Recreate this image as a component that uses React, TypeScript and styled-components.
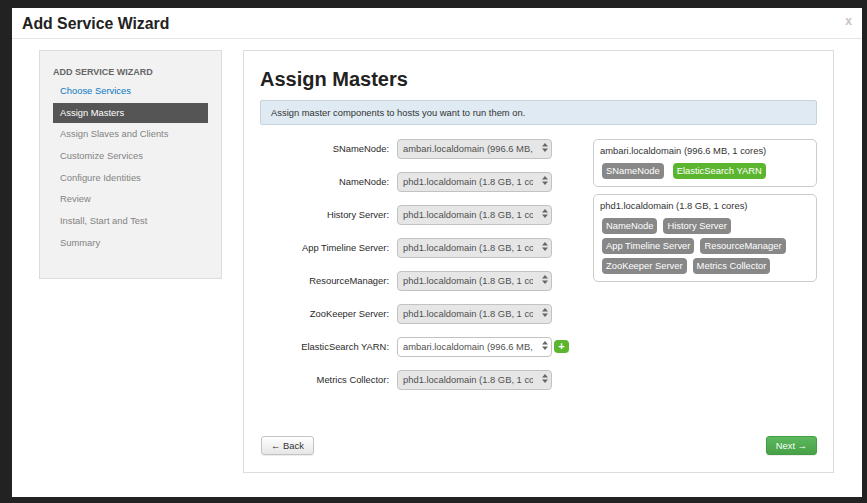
import React from "react";
import styled, { createGlobalStyle } from "styled-components";

const GlobalStyle = createGlobalStyle`
  html, body {
    margin: 0;
    padding: 0;
    background: #222222;
    font-family: "Liberation Sans", Arial, sans-serif;
  }
  * { box-sizing: border-box; }
`;

const steps = [
  "Choose Services",
  "Assign Masters",
  "Assign Slaves and Clients",
  "Customize Services",
  "Configure Identities",
  "Review",
  "Install, Start and Test",
  "Summary",
];

const masters = [
  { label: "SNameNode:", host: "ambari.localdomain (996.6 MB, 1 cores)" },
  { label: "NameNode:", host: "phd1.localdomain (1.8 GB, 1 cores)" },
  { label: "History Server:", host: "phd1.localdomain (1.8 GB, 1 cores)" },
  { label: "App Timeline Server:", host: "phd1.localdomain (1.8 GB, 1 cores)" },
  { label: "ResourceManager:", host: "phd1.localdomain (1.8 GB, 1 cores)" },
  { label: "ZooKeeper Server:", host: "phd1.localdomain (1.8 GB, 1 cores)" },
  { label: "ElasticSearch YARN:", host: "ambari.localdomain (996.6 MB, 1 cores)", addable: true },
  { label: "Metrics Collector:", host: "phd1.localdomain (1.8 GB, 1 cores)" },
];

const hosts = [
  {
    name: "ambari.localdomain (996.6 MB, 1 cores)",
    components: [
      { name: "SNameNode" },
      { name: "ElasticSearch YARN", isNew: true },
    ],
  },
  {
    name: "phd1.localdomain (1.8 GB, 1 cores)",
    components: [
      { name: "NameNode" },
      { name: "History Server" },
      { name: "App Timeline Server" },
      { name: "ResourceManager" },
      { name: "ZooKeeper Server" },
      { name: "Metrics Collector" },
    ],
  },
];

function SortArrows() {
  return (
    <svg width="6" height="9" viewBox="0 0 6 9">
      <path d="M3 0 L6 3.4 L0 3.4 Z" fill="#666" />
      <path d="M3 9 L6 5.6 L0 5.6 Z" fill="#666" />
    </svg>
  );
}

function App() {
  return (
    <>
      <GlobalStyle />
      <Modal>
        <ModalHeader>
          <h3>Add Service Wizard</h3>
          <CloseIcon>x</CloseIcon>
        </ModalHeader>
        <ModalBody>
          <Sidebar>
            <SidebarTitle>Add Service Wizard</SidebarTitle>
            {steps.map((step, i) => (
              <StepItem key={step} $state={i === 0 ? "done" : i === 1 ? "active" : "todo"}>
                {step}
              </StepItem>
            ))}
          </Sidebar>
          <MainPanel>
            <PageTitle>Assign Masters</PageTitle>
            <Alert>Assign master components to hosts you want to run them on.</Alert>
            <Columns>
              <FormColumn>
                {masters.map((m) => (
                  <FormRow key={m.label}>
                    <FieldLabel>{m.label}</FieldLabel>
                    <SelectWrap>
                      <HostSelect $white={!!m.addable} defaultValue={m.host}>
                        <option value={m.host}>{m.host}</option>
                      </HostSelect>
                      <ArrowSlot>
                        <SortArrows />
                      </ArrowSlot>
                    </SelectWrap>
                    {m.addable && <PlusButton>+</PlusButton>}
                  </FormRow>
                ))}
              </FormColumn>
              <HostColumn>
                {hosts.map((h) => (
                  <HostBox key={h.name}>
                    <HostName>{h.name}</HostName>
                    <TagList>
                      {h.components.map((c) => (
                        <Tag key={c.name} $isNew={!!c.isNew}>
                          {c.name}
                        </Tag>
                      ))}
                    </TagList>
                  </HostBox>
                ))}
              </HostColumn>
            </Columns>
            <ButtonBar>
              <Button>&larr; Back</Button>
              <Button $primary>Next &rarr;</Button>
            </ButtonBar>
          </MainPanel>
        </ModalBody>
      </Modal>
    </>
  );
}

const Modal = styled.div`
  margin: 8px 0 0 12px;
  width: 850px;
  height: 489px;
  background: #ffffff;
  display: flex;
  flex-direction: column;
`;

const ModalHeader = styled.div`
  height: 31px;
  border-bottom: 1px solid #e5e5e5;
  display: flex;
  align-items: center;
  justify-content: space-between;
  padding: 0 10px 0 10px;

  h3 {
    margin: 0;
    font-size: 15.8px;
    font-weight: bold;
    color: #222;
    line-height: 20px;
    padding-top: 1px;
  }
`;

const CloseIcon = styled.span`
  font-size: 12px;
  font-weight: bold;
  color: #c4c4c4;
  margin-top: -4px;
`;

const ModalBody = styled.div`
  display: flex;
  align-items: flex-start;
  gap: 21px;
  padding: 11px 28px 0 27px;
`;

const Sidebar = styled.div`
  width: 183px;
  background: #f2f2f2;
  border: 1px solid #dcdcdc;
  padding: 15px 13px 23px 13px;
`;

const SidebarTitle = styled.div`
  font-size: 9px;
  font-weight: bold;
  text-transform: uppercase;
  color: #666;
  line-height: 12px;
  margin-bottom: 3px;
`;

const StepItem = styled.div<{ $state: "done" | "active" | "todo" }>`
  height: 20px;
  line-height: 20px;
  margin-bottom: 1.7px;
  padding-left: 7px;
  font-size: 9.4px;
  color: ${(p) => (p.$state === "done" ? "#0a77c4" : p.$state === "active" ? "#ffffff" : "#838383")};
  background: ${(p) => (p.$state === "active" ? "#555555" : "transparent")};
`;

const MainPanel = styled.div`
  width: 591px;
  height: 423px;
  border: 1px solid #dcdcdc;
  padding: 16px 16px 17px 16px;
  display: flex;
  flex-direction: column;
`;

const PageTitle = styled.h2`
  margin: 0 0 9px 0;
  font-size: 20px;
  line-height: 24px;
  font-weight: bold;
  color: #222;
`;

const Alert = styled.div`
  height: 25px;
  line-height: 23px;
  padding: 0 10px;
  background: #dfeaf2;
  border: 1px solid #c5d3dd;
  border-radius: 2px;
  font-size: 9.4px;
  color: #333;
`;

const Columns = styled.div`
  display: grid;
  grid-template-columns: 1fr 224px;
  margin-top: 13px;
`;

const FormColumn = styled.div`
  display: flex;
  flex-direction: column;
  gap: 13px;
`;

const FormRow = styled.div`
  display: flex;
  align-items: center;
  height: 20px;
`;

const FieldLabel = styled.label`
  width: 129px;
  margin-right: 8px;
  text-align: right;
  font-size: 9.4px;
  color: #2a2a2a;
  white-space: nowrap;
`;

const SelectWrap = styled.div`
  position: relative;
  width: 155px;
  height: 20px;
`;

const HostSelect = styled.select<{ $white: boolean }>`
  appearance: none;
  -webkit-appearance: none;
  width: 100%;
  height: 20px;
  padding: 0 18px 0 5px;
  border: 1px solid #c2c2c2;
  border-radius: 4px;
  background: ${(p) => (p.$white ? "#ffffff" : "#e6e6e6")};
  font-family: "Liberation Sans", Arial, sans-serif;
  font-size: 9.4px;
  color: #505050;
  overflow: hidden;
  white-space: nowrap;
`;

const ArrowSlot = styled.span`
  position: absolute;
  right: 4px;
  top: 5px;
  display: flex;
  pointer-events: none;
`;

const PlusButton = styled.span`
  margin-left: 2px;
  width: 15px;
  height: 13px;
  border-radius: 4px;
  background: #5cb52e;
  color: #fff;
  font-size: 11px;
  font-weight: bold;
  line-height: 13px;
  text-align: center;
`;

const HostColumn = styled.div`
  display: flex;
  flex-direction: column;
  gap: 7px;
  margin-top: 1px;
`;

const HostBox = styled.div`
  border: 1px solid #cccccc;
  border-radius: 5px;
  padding: 5px 6px 7px 6px;
`;

const HostName = styled.div`
  font-size: 9.4px;
  line-height: 12px;
  color: #333;
  margin-bottom: 6px;
`;

const TagList = styled.div`
  display: flex;
  flex-wrap: wrap;
  gap: 4px 6px;
  padding-left: 2px;
`;

const Tag = styled.span<{ $isNew: boolean }>`
  height: 16px;
  line-height: 16px;
  padding: 0 4px;
  border-radius: 4px;
  font-size: 9.4px;
  color: #fff;
  background: ${(p) => (p.$isNew ? "#5cb52e" : "#888888")};
  margin-left: ${(p) => (p.$isNew ? "3px" : "0")};
`;

const ButtonBar = styled.div`
  margin-top: auto;
  display: flex;
  justify-content: space-between;
  padding: 0 0 0 1px;
`;

const Button = styled.button<{ $primary?: boolean }>`
  height: 19px;
  padding: 0 9px;
  border-radius: 3px;
  font-family: "Liberation Sans", Arial, sans-serif;
  font-size: 9.4px;
  cursor: pointer;
  color: ${(p) => (p.$primary ? "#fff" : "#333")};
  border: 1px solid ${(p) => (p.$primary ? "#449d44" : "#c4c4c4")};
  background: ${(p) =>
    p.$primary
      ? "linear-gradient(#5cb85c, #48a148)"
      : "linear-gradient(#ffffff, #e6e6e6)"};
  box-shadow: 0 1px 1px rgba(0, 0, 0, 0.08);
`;

export default App;
